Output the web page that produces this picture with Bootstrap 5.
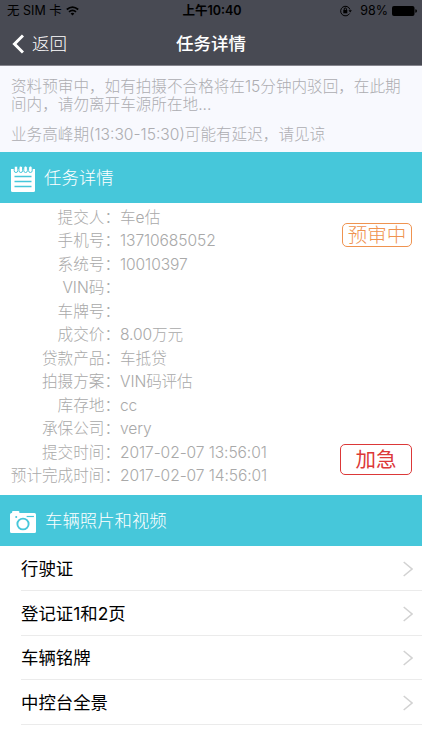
<!DOCTYPE html>
<html lang="zh-CN">
<head>
<meta charset="utf-8">
<meta name="viewport" content="width=device-width, initial-scale=1">
<title>任务详情</title>
<link href="https://cdn.jsdelivr.net/npm/bootstrap@5.3.0/dist/css/bootstrap.min.css" rel="stylesheet">
<style>
body{font-family:Inter,"Noto Sans CJK SC",sans-serif;font-weight:300;background:#fff;color:#000;overflow:hidden}
svg{display:block;flex:none}
.app-head{background:#484a53;height:66px;border-bottom:1px solid #85858d}
.status-row{height:22px;font-size:12.5px;line-height:22px;font-weight:400;padding:0 5px 0 7px}
.status-row>div,.title-row>div{flex:1 1 0}
.title-row{height:43px;line-height:43px;font-size:17.5px;color:#fff}
.title-row .page-name{font-weight:500;padding-right:12px}
.notice{background:#f8f9fe;height:86px;padding:12px 11px 0;font-size:15.6px;line-height:18px;color:#adadb1}
.section-bar{background:#46c7da;height:51px;color:#fff;font-size:17.4px;padding:2px 0 0 11px}
.section-bar svg{margin-right:9px}
.section-bar .icon-camera{margin-left:-1px}
.details{height:292px;padding-top:3px;font-size:15.6px;line-height:23.45px;color:#a9a9a9}
.detail-label{width:120px}
.num{letter-spacing:-.1px}
.stamp{right:10px;border:1px solid;border-radius:5px;text-align:center}
.stamp-review{top:20px;width:70px;height:24px;line-height:22px;font-size:19.5px;color:#ef9350}
.stamp-urgent{top:241px;width:72px;height:31px;line-height:30px;font-size:20.5px;color:#dc3838;font-weight:400}
.photo-list .list-group-item{margin-left:21px;padding:2px 9px 0 0;height:44.8px;font-size:17.4px;border-color:#ebebeb;border-width:0 0 1.3px;color:#000;font-weight:400}
</style>
</head>
<body>
<header class="app-head">
  <div class="status-row d-flex">
    <div class="d-flex align-items-center"><span class="me-1">无 SIM 卡</span>
      <svg width="13" height="10" viewBox="0 0 13 10" fill="none" stroke="#000" stroke-width="1.7"><path d="M.8 3.5Q6.5-1.4 12.2 3.5M3 5.8Q6.5 2.8 10 5.8"/><path d="M4.600 7.400Q6.500 6 8.400 7.400L6.500 9.500Z" fill="#000" stroke="none"/></svg>
    </div>
    <div class="text-center fw-semibold">上午10:40</div>
    <div class="d-flex align-items-center justify-content-end">
      <svg width="12" height="12" viewBox="0 0 12 12" fill="none" stroke="#000"><path d="M9.600 8.500A4.800 4.800 0 1 1 10 4.500"/><path d="M8.500 5.200h3.400L10.200 7.600Z" fill="#000" stroke="none"/><path d="M3.300 5h4v3.300h-4z" fill="#000" stroke="none"/><path d="M4.200 5V4a1.100 1.100 0 0 1 2.200 0v1"/></svg>
      <span class="ms-2 me-1">98%</span>
      <svg width="25" height="10" viewBox="0 0 25 10"><rect width="22.500" height="10" rx="2"/><path d="M23.300 3.200q1.700.3 1.700 1.800t-1.700 1.800z"/></svg>
    </div>
  </div>
  <div class="title-row d-flex">
    <div class="d-flex align-items-center ps-2 ms-1"><svg class="me-2" width="12" height="20" viewBox="0 0 12 20" fill="none" stroke="#fff" stroke-width="3"><path d="M11 1.500 2.500 10 11 18.500"/></svg><span>返回</span></div>
    <div class="page-name text-center">任务详情</div>
    <div></div>
  </div>
</header>
<section class="notice">
  <p class="mb-0">资料预审中，如有拍摄不合格将在15分钟内驳回，在此期间内，请勿离开车源所在地...</p>
  <p class="mb-0 mt-2 pt-1">业务高峰期(13:30-15:30)可能有延迟，请见谅</p>
</section>
<section>
  <div class="section-bar d-flex align-items-center">
    <svg width="24" height="26" viewBox="0 0 24 26"><path d="M0 3h24v21.500q0 1.500-1.500 1.500h-21Q0 26 0 24.500z" fill="#fff"/><g fill="#fff" stroke="#46c7da" stroke-width="1"><rect x="3.200" y="0" width="3.600" height="6.500" rx="1.800"/><rect x="8" y="0" width="3.600" height="6.500" rx="1.800"/><rect x="12.800" y="0" width="3.600" height="6.500" rx="1.800"/><rect x="17.600" y="0" width="3.600" height="6.500" rx="1.800"/></g><path d="M3.500 10.500h17M3.500 15.500h17M3.500 20.500h17" stroke="#46c7da" stroke-width="1.300"/></svg>
    <span>任务详情</span>
  </div>
  <div class="details position-relative">
    <div class="d-flex"><div class="detail-label text-end">提交人：</div><div>车e估</div></div>
    <div class="d-flex"><div class="detail-label text-end">手机号：</div><div class="num">13710685052</div></div>
    <div class="d-flex"><div class="detail-label text-end">系统号：</div><div class="num">10010397</div></div>
    <div class="d-flex"><div class="detail-label text-end">VIN码：</div></div>
    <div class="d-flex"><div class="detail-label text-end">车牌号：</div></div>
    <div class="d-flex"><div class="detail-label text-end">成交价：</div><div class="num">8.00万元</div></div>
    <div class="d-flex"><div class="detail-label text-end">贷款产品：</div><div>车抵贷</div></div>
    <div class="d-flex"><div class="detail-label text-end">拍摄方案：</div><div class="num">VIN码评估</div></div>
    <div class="d-flex"><div class="detail-label text-end">库存地：</div><div class="num">cc</div></div>
    <div class="d-flex"><div class="detail-label text-end">承保公司：</div><div class="num">very</div></div>
    <div class="d-flex"><div class="detail-label text-end">提交时间：</div><div class="num">2017-02-07 13:56:01</div></div>
    <div class="d-flex"><div class="detail-label text-end">预计完成时间：</div><div class="num">2017-02-07 14:56:01</div></div>
    <div class="stamp stamp-review position-absolute">预审中</div>
    <div class="stamp stamp-urgent position-absolute">加急</div>
  </div>
</section>
<section>
  <div class="section-bar d-flex align-items-center">
    <svg class="icon-camera" width="26" height="22" viewBox="0 0 25 22" preserveAspectRatio="none"><path d="M1.500 2H2V.8Q2 0 3 0h5q1 0 1 .8V2h14.500Q25 2 25 3.500v17q0 1.500-1.500 1.500h-22Q0 22 0 20.500v-17Q0 2 1.500 2z" fill="#fff"/><g fill="none" stroke="#46c7da"><circle cx="12.500" cy="13" r="5.400" stroke-width="1.800"/><path d="M16 5.500h7" stroke-width="1.200"/></g><circle cx="6" cy="6" r="1" fill="#46c7da"/></svg>
    <span>车辆照片和视频</span>
  </div>
  <div class="photo-list list-group list-group-flush">
    <div class="list-group-item d-flex align-items-center justify-content-between"><span>行驶证</span><svg width="10" height="16" viewBox="0 0 10 16" fill="none" stroke="#d2d2d2" stroke-width="1.500"><path d="M.7 1 9 8 .7 15"/></svg></div>
    <div class="list-group-item d-flex align-items-center justify-content-between"><span>登记证1和2页</span><svg width="10" height="16" viewBox="0 0 10 16" fill="none" stroke="#d2d2d2" stroke-width="1.500"><path d="M.7 1 9 8 .7 15"/></svg></div>
    <div class="list-group-item d-flex align-items-center justify-content-between"><span>车辆铭牌</span><svg width="10" height="16" viewBox="0 0 10 16" fill="none" stroke="#d2d2d2" stroke-width="1.500"><path d="M.7 1 9 8 .7 15"/></svg></div>
    <div class="list-group-item d-flex align-items-center justify-content-between"><span>中控台全景</span><svg width="10" height="16" viewBox="0 0 10 16" fill="none" stroke="#d2d2d2" stroke-width="1.500"><path d="M.7 1 9 8 .7 15"/></svg></div>
    <div class="list-group-item border-0"></div>
  </div>
</section>
<script src="https://cdn.jsdelivr.net/npm/bootstrap@5.3.0/dist/js/bootstrap.bundle.min.js"></script>
</body>
</html>
